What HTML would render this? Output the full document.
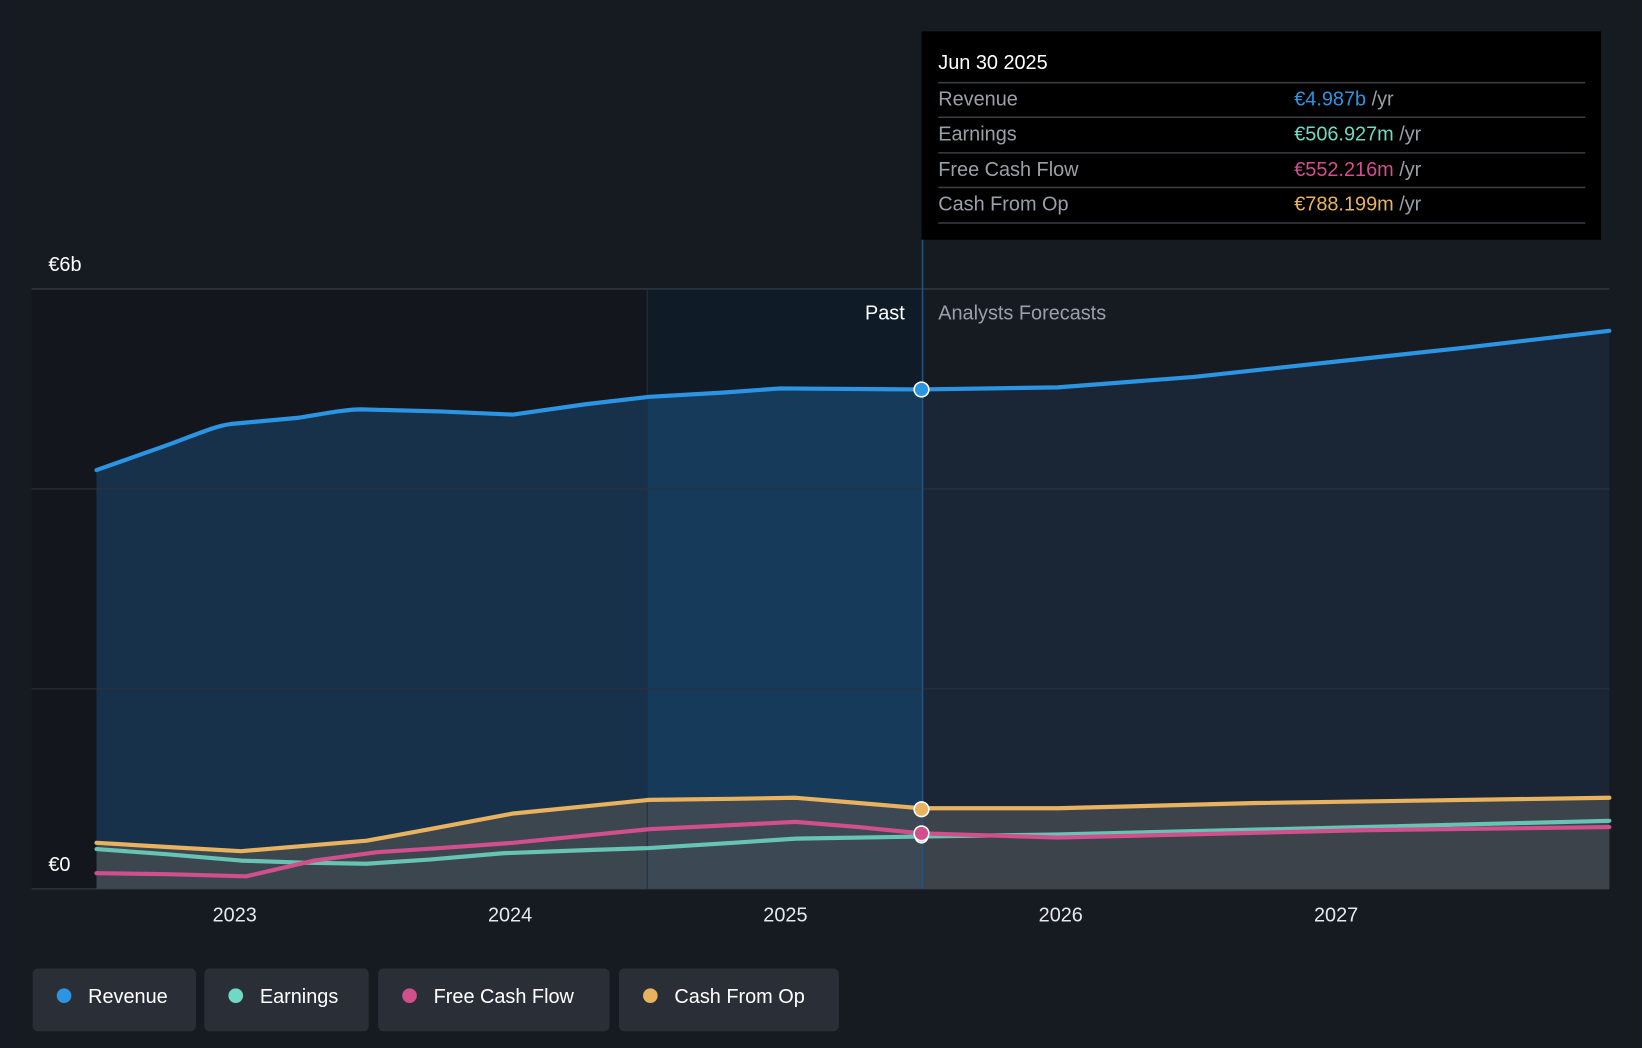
<!DOCTYPE html>
<html><head><meta charset="utf-8"><style>
html,body{margin:0;padding:0;background:#161b22;}
svg{display:block;font-family:"Liberation Sans",sans-serif;}
</style></head><body>
<svg width="1642" height="1048" viewBox="0 0 1568 1001" xmlns="http://www.w3.org/2000/svg">
<defs>
<clipPath id="c1"><rect x="0" y="0" width="618" height="1001"/></clipPath>
<clipPath id="c2"><rect x="618" y="0" width="263" height="1001"/></clipPath>
<clipPath id="c3"><rect x="881" y="0" width="700" height="1001"/></clipPath>
</defs>
<rect width="1568" height="1001" fill="#161b22"/>
<rect x="30" y="276" width="588" height="573" fill="#13171d"/>
<rect x="618" y="276" width="263" height="573" fill="#0f1c28"/>
<g id="rf">
<path clip-path="url(#c1)" d="M92,449 L160,425 C190,414 205,407 220,405 L285,399 C310,395 330,391 345,391 L420,393 L490,396 L560,386 L620,379 L690,375 L745,371 L880,372 L1010,370 L1140,360 L1270,346 L1400,332 L1537,316 L1537,849 L92,849 Z" fill="#17314a"/>
<path clip-path="url(#c2)" d="M92,449 L160,425 C190,414 205,407 220,405 L285,399 C310,395 330,391 345,391 L420,393 L490,396 L560,386 L620,379 L690,375 L745,371 L880,372 L1010,370 L1140,360 L1270,346 L1400,332 L1537,316 L1537,849 L92,849 Z" fill="#153a5a"/>
<path clip-path="url(#c3)" d="M92,449 L160,425 C190,414 205,407 220,405 L285,399 C310,395 330,391 345,391 L420,393 L490,396 L560,386 L620,379 L690,375 L745,371 L880,372 L1010,370 L1140,360 L1270,346 L1400,332 L1537,316 L1537,849 L92,849 Z" fill="#1a2636"/>
</g>
<path d="M92,805 L160,809 L230,813 L290,808 L350,803 L410,792 L490,777 L560,770 L620,764 L700,763 L760,762 L820,767 L880,772 L1010,772 L1200,767 L1537,762 L1537,849 L92,849 Z" fill="#4a4d52" opacity="0.75"/>
<g stroke="#2b323c" stroke-width="1">
<line x1="30" y1="276" x2="1537" y2="276" stroke="#3a414c"/>
<line x1="30" y1="467" x2="1537" y2="467"/>
<line x1="30" y1="658" x2="1537" y2="658"/>
<line x1="30" y1="849" x2="1537" y2="849" stroke="#3a414c"/>
</g>
<line x1="881" y1="228" x2="881" y2="849" stroke="#24527a" stroke-width="1.5"/>
<line x1="618" y1="276" x2="618" y2="849" stroke="#22303c" stroke-width="1"/>
<g fill="none" stroke-width="4" stroke-linejoin="round" stroke-linecap="round">
<path d="M92,811 L160,816 L230,822 L290,824 L350,825 L410,821 L480,815 L560,812 L620,810 L700,805 L760,801 L880,799 L1010,797 L1300,790 L1537,784" stroke="#6fd9c6" opacity="0.85"/>
<path d="M92,834 L160,835 L235,837 L300,822 L360,814 L420,810 L490,805 L560,798 L620,792 L700,788 L760,785 L820,790 L880,796 L1010,800 L1300,793 L1537,790" stroke="#d04f8c"/>
<path d="M92,805 L160,809 L230,813 L290,808 L350,803 L410,792 L490,777 L560,770 L620,764 L700,763 L760,762 L820,767 L880,772 L1010,772 L1200,767 L1537,762" stroke="#e8b25f"/>
<path d="M92,449 L160,425 C190,414 205,407 220,405 L285,399 C310,395 330,391 345,391 L420,393 L490,396 L560,386 L620,379 L690,375 L745,371 L880,372 L1010,370 L1140,360 L1270,346 L1400,332 L1537,316" stroke="#2b95e3"/>
</g>
<g stroke="#fff" stroke-width="1.5">
<circle cx="880" cy="372" r="7" fill="#2b95e3"/>
<circle cx="880" cy="799" r="6" fill="#6fd9c6"/>
<circle cx="880" cy="773" r="7" fill="#e8b25f"/>
<circle cx="880" cy="796" r="7" fill="#d04f8c"/>
</g>
<text x="46" y="259" fill="#fff" font-size="19">€6b</text>
<text x="46" y="832" fill="#fff" font-size="19">€0</text>
<text x="864" y="305" fill="#fff" font-size="19" text-anchor="end">Past</text>
<text x="896" y="305" fill="#9aa0a8" font-size="19">Analysts Forecasts</text>
<g fill="#e6e8eb" font-size="19" text-anchor="middle">
<text x="224" y="880">2023</text><text x="487" y="880">2024</text><text x="750" y="880">2025</text><text x="1013" y="880">2026</text><text x="1276" y="880">2027</text>
</g>
<rect x="880" y="30" width="649" height="199" fill="#000"/>
<text x="896" y="66" fill="#fff" font-size="19">Jun 30 2025</text>
<g stroke="#3a3d42" stroke-width="1.5">
<line x1="896" y1="79" x2="1514" y2="79"/><line x1="896" y1="112" x2="1514" y2="112"/><line x1="896" y1="146" x2="1514" y2="146"/><line x1="896" y1="179" x2="1514" y2="179"/><line x1="896" y1="213" x2="1514" y2="213"/>
</g>
<g font-size="19">
<text x="896" y="101" fill="#9aa0a8">Revenue</text>
<text x="896" y="134" fill="#9aa0a8">Earnings</text>
<text x="896" y="168" fill="#9aa0a8">Free Cash Flow</text>
<text x="896" y="201" fill="#9aa0a8">Cash From Op</text>
<text x="1236" y="101" fill="#2b95e3">€4.987b <tspan fill="#9aa0a8">/yr</tspan></text>
<text x="1236" y="134" fill="#6fd9c6">€506.927m <tspan fill="#9aa0a8">/yr</tspan></text>
<text x="1236" y="168" fill="#d04f8c">€552.216m <tspan fill="#9aa0a8">/yr</tspan></text>
<text x="1236" y="201" fill="#e8b25f">€788.199m <tspan fill="#9aa0a8">/yr</tspan></text>
</g>
<g font-size="19" fill="#fff">
<rect x="31" y="925" width="156" height="60" rx="5" fill="#2a2f37"/>
<circle cx="61" cy="951" r="7" fill="#2b95e3"/><text x="84" y="958">Revenue</text>
<rect x="195" y="925" width="157" height="60" rx="5" fill="#2a2f37"/>
<circle cx="225" cy="951" r="7" fill="#6fd9c6"/><text x="248" y="958">Earnings</text>
<rect x="361" y="925" width="221" height="60" rx="5" fill="#2a2f37"/>
<circle cx="391" cy="951" r="7" fill="#d04f8c"/><text x="414" y="958">Free Cash Flow</text>
<rect x="591" y="925" width="210" height="60" rx="5" fill="#2a2f37"/>
<circle cx="621" cy="951" r="7" fill="#e8b25f"/><text x="644" y="958">Cash From Op</text>
</g>
</svg>
</body></html>
